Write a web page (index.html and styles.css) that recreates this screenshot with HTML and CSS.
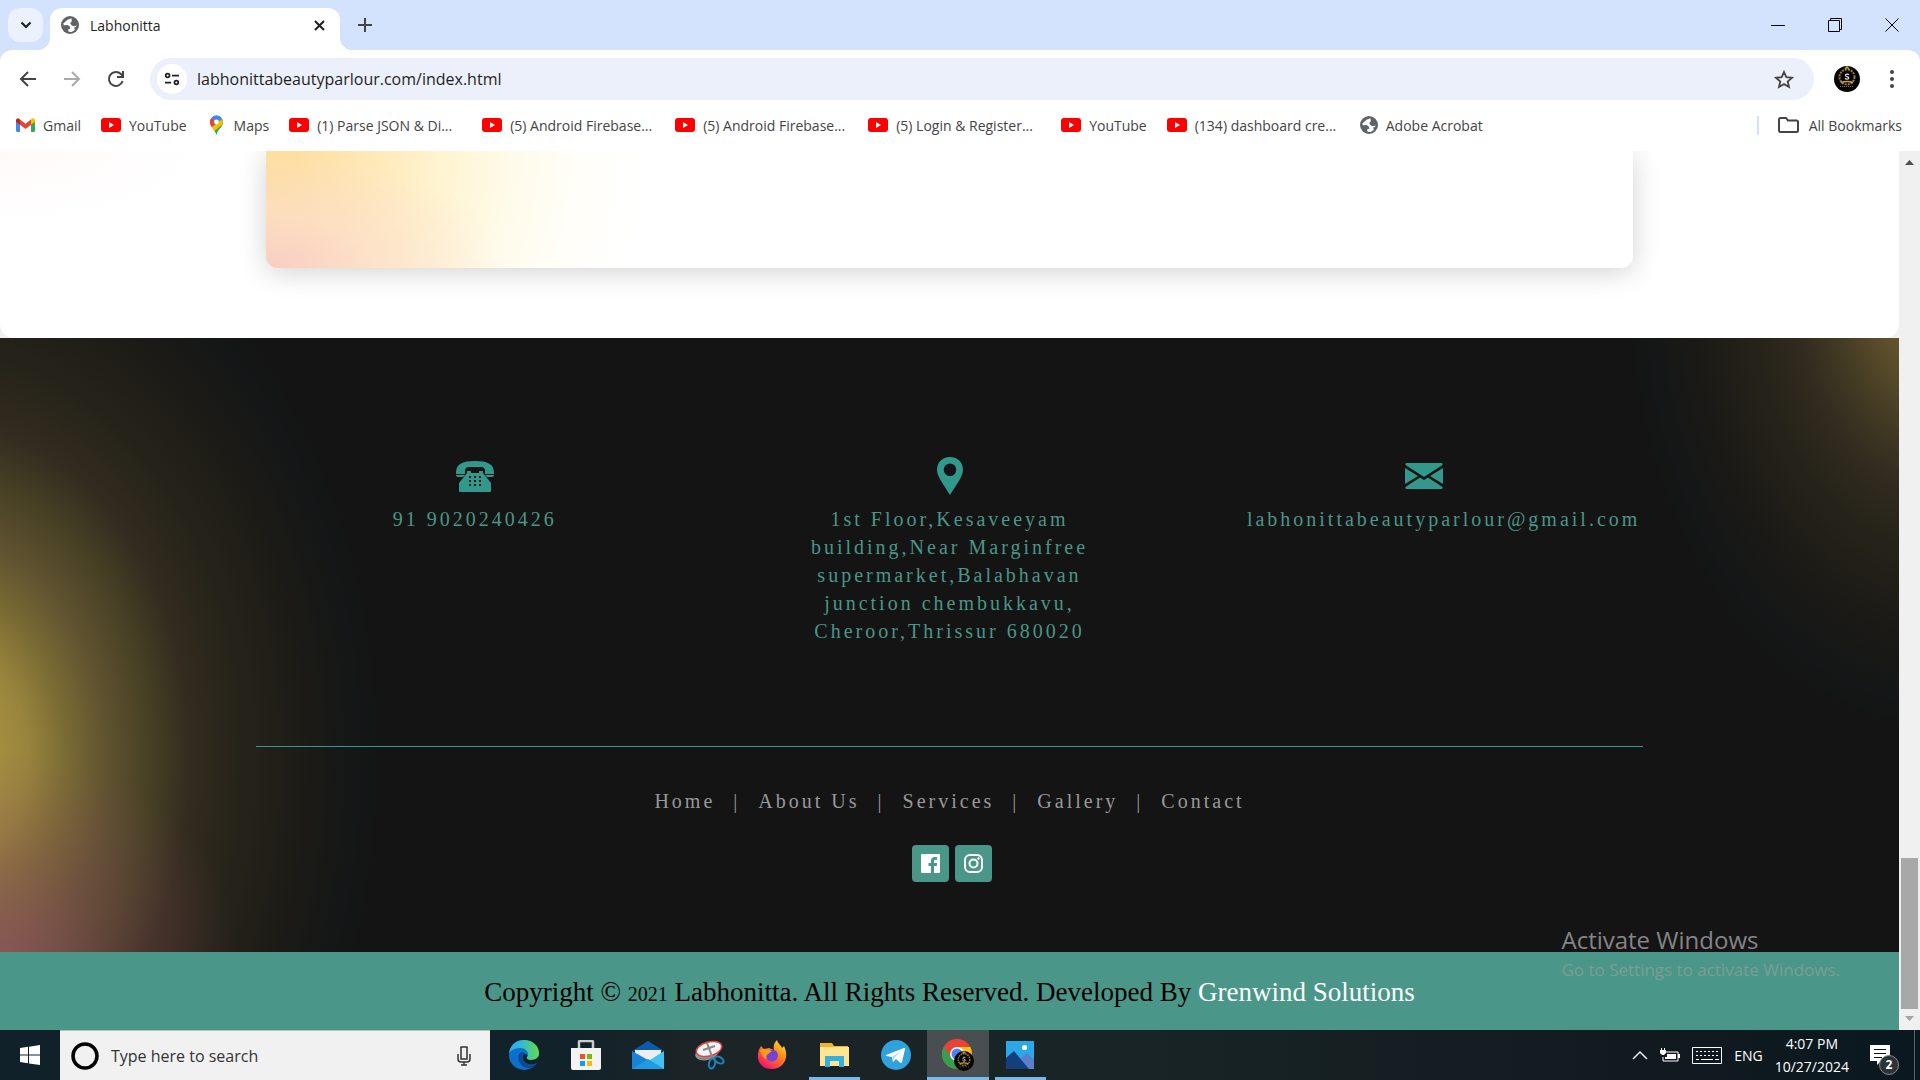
FILE: index.html
```html
<!DOCTYPE html>
<html lang="en">
<head>
<meta charset="utf-8">
<title>Labhonitta</title>
<link rel="stylesheet" href="styles.css">
</head>
<body>
<svg class="defs" aria-hidden="true">
  <symbol id="globe" viewBox="0 0 18 18"><circle cx="9" cy="9" r="9" fill="#5f6368"/><path d="M10.500 2.200 6.500 3.800 2.300 7.600l.5 1.700 3.700-.3 2 1.300 1 2.200-2.500.9.600 2.300 3 .2 3.200-1.900-.6-2.600 1.600-.5 1-1.500-2.600.9-2.400-.7-1.600-2.400 1.600-1.900z" fill="#fff"/></symbol>
  <symbol id="yt" viewBox="0 0 20 14"><rect width="20" height="14" rx="3" fill="#f00"/><path d="M8 4v6l5-3z" fill="#fff"/></symbol>
  <symbol id="seal" viewBox="0 0 26 26"><circle cx="13" cy="13" r="13" fill="#050505"/><circle cx="13" cy="11" r="7.500" fill="none" stroke="#9a7b2c" stroke-width="2" stroke-dasharray="2 1"/><path d="M11 3l2-2 2 2M7 16.500q6-2 12 0" fill="none" stroke="#c9a343" stroke-width="1.500"/><path d="M15 9c-1-1.500-4-1-3.500.6.400 1.200 3.200.9 3.300 2.400 0 1.500-3 1.600-3.800.1" fill="none" stroke="#ddd" stroke-width="1.200"/><path d="M6 20.500h14" stroke="#775" stroke-dasharray="1 1"/></symbol>
</svg>

<header class="browser">
  <div class="tabstrip">
    <button class="tab-search" aria-label="Search tabs"><svg width="12" height="8" viewBox="0 0 12 8"><path d="M1.500 1.500 6 6l4.500-4.500" fill="none" stroke="#1f1f1f" stroke-width="2.200"/></svg></button>
    <div class="tab">
      <svg width="18" height="18"><use href="#globe"/></svg>
      <span class="tab-title">Labhonitta</span>
      <button class="plain" aria-label="Close tab"><svg width="11" height="11" viewBox="0 0 11 11"><path d="m1 1 9 9m0-9-9 9" stroke="#1f1f1f" stroke-width="2"/></svg></button>
    </div>
    <button class="plain new-tab" aria-label="New tab"><svg width="14" height="14" viewBox="0 0 14 14"><path d="M7 0v14M0 7h14" stroke="#444" stroke-width="2"/></svg></button>
    <div class="window-buttons">
      <button class="plain" aria-label="Minimize"><svg width="14" height="14"><path d="M0 7.500h14" stroke="#000"/></svg></button>
      <button class="plain" aria-label="Restore"><svg width="14" height="14"><path d="M.5 2.500h11v11H.5zM2.500 2.500v-2h11v11h-2" fill="none" stroke="#000"/></svg></button>
      <button class="plain" aria-label="Close"><svg width="14" height="14"><path d="m.5.500 13 13m0-13-13 13" stroke="#000"/></svg></button>
    </div>
  </div>
  <div class="toolbar">
    <button class="plain tool" aria-label="Back"><svg width="18" height="18" viewBox="0 0 18 18"><path d="M17 9H2m7-7L2 9l7 7" fill="none" stroke="#444" stroke-width="2"/></svg></button>
    <button class="plain tool" aria-label="Forward"><svg width="18" height="18" viewBox="0 0 18 18"><path d="M1 9h15M9 2l7 7-7 7" fill="none" stroke="#aaa" stroke-width="2"/></svg></button>
    <button class="plain tool" aria-label="Reload"><svg width="18" height="18" viewBox="0 0 18 18"><path d="M15.600 11a7 7 0 1 1-1.700-7l2 2M16 1v6h-6" fill="none" stroke="#444" stroke-width="2"/></svg></button>
    <div class="omnibox">
      <button class="site-info" aria-label="Site information"><svg width="16" height="14" viewBox="0 0 18 16"><g fill="none" stroke="#222" stroke-width="2"><circle cx="4" cy="4" r="2.200"/><path d="M9 4h8M1 12h7"/><circle cx="14" cy="12" r="2.200"/></g></svg></button>
      <input class="url" type="text" aria-label="Address" value="labhonittabeautyparlour.com/index.html">
      <button class="plain" aria-label="Bookmark this page"><svg width="20" height="19" viewBox="0 0 20 19"><path d="m10 2 2.300 5.200 5.700.5-4.300 3.800 1.300 5.500-5-2.900L5 17l1.300-5.500L2 7.700l5.700-.5z" fill="none" stroke="#444" stroke-width="1.800"/></svg></button>
    </div>
    <button class="plain profile" aria-label="Profile"><svg width="26" height="26"><use href="#seal"/></svg></button>
    <button class="plain menu" aria-label="Menu"><svg width="4" height="18" viewBox="0 0 4 18"><g fill="#444"><circle cx="2" cy="2" r="2"/><circle cx="2" cy="9" r="2"/><circle cx="2" cy="16" r="2"/></g></svg></button>
  </div>
  <nav class="bookmarks" aria-label="Bookmarks">
    <a href="#"><svg width="19" height="14" viewBox="0 0 19 14"><path d="M0 2v10.500Q0 14 1.500 14H4V5z" fill="#4285f4"/><path d="M15 5v9h2.500q1.500 0 1.500-1.500V2z" fill="#34a853"/><path d="M4 1.500v5.300l5.500 4.200L15 6.800V1.500L9.500 5.700z" fill="#ea4335"/><path d="M15 1.500v5.300l4-3V2q-1-3-4-.5z" fill="#fbbc04"/><path d="M0 2v1.800l4 3V1.500Q1-1 0 2z" fill="#c5221f"/></svg>Gmail</a>
    <a href="#"><svg width="20" height="14"><use href="#yt"/></svg>YouTube</a>
    <a href="#"><svg width="19" height="20" viewBox="0 0 19 20"><path d="M3 7a6.500 6.500 0 0 1 13 0c0 5-5.500 6.500-6.500 13C9 15 3 11 3 7z" fill="#34a853"/><path d="M3 7a6.500 6.500 0 0 1 1.500-4.100L9.500 7l-4.800 5.300Q3 10 3 7z" fill="#ea4335"/><path d="M4.500 2.900A6.500 6.500 0 0 1 14.500 3L9.500 8z" fill="#4285f4"/><path d="m4.700 12.300 10.500-8.400q1.500 3.600-.4 6.600L8 17z" fill="#fbbc04"/><path d="M15.600 9.200 7.600 16q1.600 2 1.900 4c.5-5.500 5-7 6.100-10.800z" fill="#34a853"/><circle cx="9.500" cy="7" r="2.400" fill="#fff"/></svg>Maps</a>
    <a href="#" class="long"><svg width="20" height="14"><use href="#yt"/></svg>(1) Parse JSON &amp; Di...</a>
    <a href="#" class="long"><svg width="20" height="14"><use href="#yt"/></svg>(5) Android Firebase...</a>
    <a href="#" class="long"><svg width="20" height="14"><use href="#yt"/></svg>(5) Android Firebase...</a>
    <a href="#" class="long"><svg width="20" height="14"><use href="#yt"/></svg>(5) Login &amp; Register...</a>
    <a href="#"><svg width="20" height="14"><use href="#yt"/></svg>YouTube</a>
    <a href="#" class="long"><svg width="20" height="14"><use href="#yt"/></svg>(134) dashboard cre...</a>
    <a href="#"><svg width="18" height="18"><use href="#globe"/></svg>Adobe Acrobat</a>
    <a href="#" class="all-bookmarks"><svg width="21" height="16" viewBox="0 0 21 16"><path d="M1 2.500Q1 1 2.500 1H8l2 2.500h8.500Q20 3.500 20 5v8.500q0 1.500-1.500 1.500h-16Q1 15 1 13.500z" fill="none" stroke="#444" stroke-width="2"/></svg>All Bookmarks</a>
  </nav>
</header>

<div class="viewport">
  <div class="page">
    <main class="main">
      <section class="card"></section>
    </main>
    <footer class="footer">
      <div class="contacts">
        <div class="contact">
          <svg width="38" height="38" viewBox="0 0 38 38" fill="#32988b"><path d="M0 16C0 7 6 4 19 4s19 3 19 12v1h-9v-3q0-4-4-4H13q-4 0-4 4v3H0zM0 18h9q-1 2-3 2H2q-2 0-2-2zm29 0h9q0 2-2 2h-4q-2 0-3-2z"/><path fill-rule="evenodd" d="M11 14h4v2h8v-2h4v2l8 10v8q0 1-1 1H4q-1 0-1-1v-8l8-10zm2 5v2h2v-2zm5 0v2h2v-2zm5 0v2h2v-2zm-10 4v2h2v-2zm5 0v2h2v-2zm5 0v2h2v-2zm-10 4v2h2v-2zm5 0v2h2v-2zm5 0v2h2v-2z"/></svg>
          <a href="#">91 9020240426</a>
        </div>
        <div class="contact">
          <svg width="38" height="38" viewBox="0 0 38 38" fill="#32988b"><path fill-rule="evenodd" d="M19 0c8 0 13 5.500 13 13 0 6-5 12-13 25C11 25 6 19 6 13 6 5.500 11 0 19 0zm0 6.500a6.300 6.300 0 1 0 0 12.600 6.300 6.300 0 0 0 0-12.600z"/></svg>
          <address>1st Floor,Kesaveeyam<br>building,Near Marginfree<br>supermarket,Balabhavan<br>junction chembukkavu,<br>Cheroor,Thrissur 680020</address>
        </div>
        <div class="contact">
          <svg width="38" height="38" viewBox="0 0 38 38" fill="#32988b"><path d="M1 6h36q1 1 .5 2L22 18l-3 2-3-2L.5 8Q0 7 1 6zM0 11l13 8-13 8zm38 0v16l-13-8zM.5 30 15 20.500l4 2.500 4-2.500L37.500 30q.5 1-.5 2H1q-1-1-.5-2z"/></svg>
          <a href="#" class="email">labhonittabeautyparlour@gmail.com</a>
        </div>
      </div>
      <hr class="rule">
      <nav class="site-nav" aria-label="Site">
        <a href="#">Home</a><span>|</span><a href="#">About Us</a><span>|</span><a href="#">Services</a><span>|</span><a href="#">Gallery</a><span>|</span><a href="#">Contact</a>
      </nav>
      <div class="social">
        <a href="#" aria-label="Facebook"><svg width="19" height="19" viewBox="0 0 19 19"><path fill="#fff" d="M1 0h17q1 0 1 1v17q0 1-1 1h-5v-7h2.700l.4-3H13V7.200q0-1.400 1.600-1.400h1.600V3.200Q9.900 2.100 9.900 7v2H7.500v3h2.400v7H1q-1 0-1-1V1q0-1 1-1z"/></svg></a>
        <a href="#" aria-label="Instagram"><svg width="19" height="19" viewBox="0 0 19 19"><rect x="1" y="1" width="17" height="17" rx="5" fill="none" stroke="#fff" stroke-width="2"/><circle cx="9.500" cy="9.500" r="4" fill="none" stroke="#fff" stroke-width="2"/><circle cx="14.500" cy="4.500" r="1.200" fill="#fff"/></svg></a>
      </div>
    </footer>
    <div class="copyright">Copyright © <small>2021</small> Labhonitta. All Rights Reserved. Developed By <a href="#">Grenwind Solutions</a></div>
  </div>
  <div class="scrollbar">
    <svg width="9" height="5"><path d="M0 5h9L4.500 0z" fill="#505050"/></svg>
    <div class="thumb"></div>
    <svg width="9" height="5"><path d="M0 0h9L4.500 5z" fill="#a3a3a3"/></svg>
  </div>
  <div class="watermark"><strong>Activate Windows</strong><span>Go to Settings to activate Windows.</span></div>
</div>

<footer class="taskbar">
  <button class="plain start" aria-label="Start"><svg width="20" height="20" viewBox="0 0 20 20"><path d="M0 3l8-1.200V9.500H0zm9-1.300L20 0v9.500H9zM0 10.500h8v7.700L0 17zm9 0h11V20L9 18.400z" fill="#fff"/></svg></button>
  <label class="search">
    <svg width="28" height="28" viewBox="0 0 28 28"><circle cx="14" cy="14" r="12" fill="none" stroke="#000" stroke-width="3.500"/></svg>
    <input type="text" placeholder="Type here to search" aria-label="Search">
    <svg width="14" height="20" viewBox="0 0 14 20"><path d="M4 1h6v12H4zM1 8v5q0 3 3 3h6q3 0 3-3V8M7 16v3m-3 0h6" fill="none" stroke="#333" stroke-width="1.500"/></svg>
  </label>
  <div class="apps">
    <button class="app" aria-label="Edge"><svg width="30" height="30" viewBox="0 0 30 30"><defs><linearGradient id="eg"><stop offset=".3" stop-color="#2bb3e3"/><stop offset="1" stop-color="#62db50"/></linearGradient></defs><circle cx="15" cy="15" r="15" fill="#0c6fc9"/><path d="M0 14C1 4 8 0 15 0c9 0 15 6 15 13 0 5-4 7-8 7-4 0-5-2-4-3 3-4-1-9-7-9C5 8 1 11 0 14z" fill="url(#eg)"/><path d="M10 14c-3 8 4 15 11 14 3-.5 5-2 7-5-6 3-14 1-14-6 0-2 1-3 2-4-3-1-5 0-6 1z" fill="#0b4a94"/><path d="M18 17c-1 1 0 3 4 3 3 0 6-1 7.500-4L30 20l-2 3c-6 3-14 1-14-6 0-2 1-3 2-3 2 0 3 1 2 3z" fill="#13222a"/></svg></button>
    <button class="app" aria-label="Store"><svg width="30" height="30" viewBox="0 0 30 30"><path d="M8 9V2q0-1 1-1h12q1 0 1 1v7" fill="none" stroke="#ccc" stroke-width="2.500"/><path d="M0 8h30v20q0 2-2 2H2q-2 0-2-2z" fill="#f3f3f3"/><path d="M9 14h5v5H9z" fill="#f25022"/><path d="M16 14h5v5h-5z" fill="#7fba00"/><path d="M9 21h5v5H9z" fill="#00a4ef"/><path d="M16 21h5v5h-5z" fill="#ffb900"/></svg></button>
    <button class="app" aria-label="Mail"><svg width="32" height="28" viewBox="0 0 32 28"><path d="M0 10 16 0l16 10z" fill="#0a5cab"/><path d="M3 9h26v12H3z" fill="#eee"/><path d="M0 10v18h32z" fill="#1683d8"/><path d="M32 10v18H4z" fill="#43c1f2"/><path d="M0 28h32L16 18z" fill="#219ae4"/></svg></button>
    <button class="app" aria-label="Snipping Tool"><svg width="30" height="30" viewBox="0 0 30 30"><ellipse cx="12" cy="13" rx="12" ry="7" transform="rotate(-15 12 13)" fill="#999"/><ellipse cx="14" cy="9" rx="13" ry="7" transform="rotate(-15 14 9)" fill="#f4f4f4" stroke="#d44" stroke-width="1.500"/><path d="M12 3l6 16M4 19l14-1M8 10l12-4" stroke="#888" stroke-width="2"/><g fill="none" stroke="#1d84bd" stroke-width="2"><ellipse cx="17" cy="23.500" rx="3" ry="5" transform="rotate(15 17 23.500)"/><ellipse cx="24" cy="20" rx="5" ry="3" transform="rotate(30 24 20)"/></g></svg></button>
    <button class="app" aria-label="Firefox"><svg width="30" height="30" viewBox="0 0 30 30"><defs><linearGradient id="ff" x1="1" y1="0" x2=".3" y2="1"><stop offset="0" stop-color="#fff044"/><stop offset=".45" stop-color="#ff8a16"/><stop offset="1" stop-color="#f5156c"/></linearGradient></defs><path d="M4 6l3 3 5-1 5 2c-1-4 0-7 3-10 1 4 4 5 5 8l2-2c6 12-1 23-12 23C2 29-3 17 4 6z" fill="url(#ff)"/><circle cx="15" cy="15.500" r="6" fill="#7542d5"/><path d="M3 10c4-2 8-1 12 1l-4 3q-3 2-1 5-5-1-7-9z" fill="#ff9a1f"/></svg></button>
    <button class="app open" aria-label="File Explorer"><svg width="30" height="26" viewBox="0 0 30 26"><path d="M1 1h12l2 3h14v4H1z" fill="#f0b429"/><path d="M1 5h29v19H1z" fill="#ffe492"/><path d="M6 25V14h19v11h-5v-6h-9v6z" fill="#35aee2"/></svg></button>
    <button class="app" aria-label="Telegram"><svg width="30" height="30" viewBox="0 0 30 30"><circle cx="15" cy="15" r="15" fill="#30a3dd"/><path d="m5 15 18-7q1.500-.5 1 1l-3 13q-.5 1.500-2 .5l-4-3.500-3 3-1-5-5.500-1q-1-.3-.5-1z" fill="#fff"/><path d="m11 17 10-7-8 8-1 4z" fill="#b8d8e9"/></svg></button>
    <button class="app open active" aria-label="Chrome"><svg width="32" height="32" viewBox="0 0 32 32"><circle cx="15" cy="15" r="15" fill="#ea4335"/><path d="M2 7.500A15 15 0 0 0 15 30l6-11H9z" fill="#34a14f"/><path d="M15 8h13.200A15 15 0 0 1 15 30l6.500-11z" fill="#fbc116"/><circle cx="15" cy="15" r="7" fill="#fff"/><circle cx="15" cy="15" r="5.500" fill="#4285f4"/><svg x="12" y="12" width="20" height="20"><use href="#seal"/></svg></svg></button>
    <button class="app open" aria-label="Photos"><svg width="28" height="28" viewBox="0 0 28 28"><path d="M0 0h28v28H0z" fill="#2aa8ea"/><path d="m12 20 9-8 7 7v9H12z" fill="#5b7fcd"/><path d="M0 17 8 10l15 18H0z" fill="#153f7c"/><circle cx="18.500" cy="6.500" r="2.600" fill="#fff"/></svg></button>
  </div>
  <div class="tray">
    <svg width="16" height="10"><path d="m1 9 7-7 7 7" fill="none" stroke="#eee" stroke-width="1.500"/></svg>
    <svg width="20" height="14"><path d="M5 4h13v9H3V9" fill="none" stroke="#fff"/><path d="M7 6h9v5H5V9h2zM18 6h2v4h-2zM0 2h6v3L4 7H2L0 5zM1 0h1v2H1zm3 0h1v2H4z" fill="#fff"/></svg>
    <svg width="30" height="17" viewBox="0 0 30 17"><path d="M.5.500h29v16H.5z" fill="none" stroke="#fff"/><path d="M4 4.500h23M4 8.500h23" stroke="#fff" stroke-dasharray="2 2"/><path d="M4 12.500h3m2 0h12m2 0h4" stroke="#fff"/></svg>
    <span>ENG</span>
    <time class="clock"><span>4:07 PM</span><span>10/27/2024</span></time>
    <button class="plain notice" aria-label="Notifications"><svg width="20" height="20" viewBox="0 0 20 20"><path d="M0 0h20v16H11l-4 4v-4H0z" fill="#fff"/><path d="M4 4.500h12M4 8.500h12M4 12.500h8" stroke="#111"/></svg><span class="badge">2</span></button>
  </div>
</footer>
</body>
</html>
```
FILE: styles.css
```css
* { box-sizing: border-box; }

body {
  display: flex;
  flex-direction: column;
  height: 100vh;
  margin: 0;
  overflow: hidden;
  font-family: "Open Sans", "Noto Sans", sans-serif;
  color: #1f1f1f;
}

a { color: inherit; text-decoration: none; }
button, input { font: inherit; color: inherit; }
svg { display: block; flex: none; }

.defs { position: absolute; width: 0; height: 0; }

.plain {
  display: flex;
  align-items: center;
  justify-content: center;
  padding: 0;
  border: 0;
  background: none;
}

/* Browser chrome */
.browser { flex: none; background: #d3e2fd; }

.tabstrip {
  display: flex;
  align-items: flex-end;
  height: 50px;
  padding-left: 8px;
}

.tab-search {
  display: flex;
  align-items: center;
  justify-content: center;
  width: 35px;
  height: 34px;
  margin: 0 7px 8px 0;
  padding: 0;
  border: 0;
  border-radius: 12px;
  background: #ebf1fd;
}

.tab {
  position: relative;
  display: flex;
  align-items: center;
  gap: 11px;
  width: 290px;
  height: 42px;
  padding: 0 15px 8px 11px;
  border-radius: 12px 12px 0 0;
  background: #fff;
  font-size: 14px;
}

.tab::before,
.tab::after {
  content: "";
  position: absolute;
  bottom: 0;
  width: 12px;
  height: 12px;
}

.tab::before { right: 100%; background: radial-gradient(circle at 0 0, transparent 12px, #fff 12px); }
.tab::after { left: 100%; background: radial-gradient(circle at 100% 0, transparent 12px, #fff 12px); }

.tab-title { flex: 1; }
.new-tab { width: 50px; height: 50px; }
.window-buttons { display: flex; margin-left: auto; }
.window-buttons button { width: 57px; height: 50px; }

.toolbar {
  display: flex;
  align-items: center;
  height: 58px;
  padding: 0 16px 0 6px;
  border-radius: 12px 12px 0 0;
  background: #fff;
}

.tool { width: 44px; height: 42px; }

.omnibox {
  display: flex;
  flex: 1;
  align-items: center;
  height: 42px;
  margin-left: 12px;
  padding: 0 20px 0 7px;
  border-radius: 21px;
  background: #ecf0fa;
}

.site-info {
  display: flex;
  align-items: center;
  justify-content: center;
  width: 30px;
  height: 30px;
  padding: 0;
  border: 0;
  border-radius: 50%;
  background: #fff;
}

.url {
  flex: 1;
  min-width: 0;
  padding: 0 10px;
  border: 0;
  background: none;
  font-size: 16px;
}

.profile { width: 26px; margin: 0 20px; }
.menu { width: 24px; }

.bookmarks {
  display: flex;
  align-items: center;
  gap: 20px;
  height: 43px;
  padding: 0 18px 9px 16px;
  background: #fff;
  color: #444;
  font-size: 14px;
  white-space: nowrap;
}

.bookmarks a { display: flex; align-items: center; gap: 8px; }
.bookmarks .long { min-width: 173px; }

.bookmarks .all-bookmarks {
  gap: 10px;
  margin-left: auto;
  padding-left: 19px;
  border-left: 2px solid #d3e2fd;
}

/* Web page */
.viewport {
  position: relative;
  display: flex;
  flex: 1;
  min-height: 0;
  overflow: hidden;
}

.page {
  display: flex;
  flex: 1;
  flex-direction: column;
  min-width: 0;
  background: #f0f0f0;
  font-family: "Liberation Serif", serif;
}

.main {
  flex: 1;
  padding-bottom: 70px;
  overflow: hidden;
  border-radius: 0 0 14px 14px;
  background: radial-gradient(ellipse 200px 70px at 0 0, #fffaf9, #fff) #fff;
}

.card {
  width: 72%;
  height: 100%;
  margin: 0 auto;
  border-radius: 0 0 12px 12px;
  background:
    radial-gradient(ellipse 240px 120px at 0 100%, #f9cdc2, rgba(251, 218, 203, .6) 45%, transparent),
    radial-gradient(ellipse 380px 400px at 0 0, #fedf9f 8%, #ffe9b8 28%, #fff4d0 46%, #fffbea 65%, #fffef8 82%, transparent),
    #fff;
  box-shadow: 0 4px 28px rgba(0, 0, 0, .18);
}

.footer {
  flex: none;
  padding: 119px 0 70px;
  background:
    radial-gradient(ellipse 240px 200px at 0 100%, rgba(150, 86, 100, .7), rgba(140, 80, 90, .35) 45%, transparent),
    radial-gradient(ellipse 440px 590px at -60px 420px, #a28c40 14%, #98843d 20%, #7c6d34 28%, #5f5230 38%, #474024 48%, #332b1f 57%, #252319 69%, #1b1a16 84%, #141717 95%, transparent),
    radial-gradient(ellipse 310px 440px at calc(100% + 40px) -50px, #786536, #65552e 17%, #443b24 34%, #322b1f 46%, #252319 60%, #1a1916 80%, #141717 94%, transparent),
    #141414;
}

.contacts {
  display: grid;
  grid-template-columns: repeat(3, 1fr);
  width: 75%;
  min-height: 289px;
  margin: 0 auto;
  color: #4a9688;
  font-size: 20px;
  line-height: 28px;
  letter-spacing: 3px;
  text-align: center;
}

.contact {
  display: flex;
  flex-direction: column;
  align-items: center;
  gap: 10px;
  min-width: 0;
  padding: 0 60px;
}

.contact address { font-style: normal; }
.contact .email { align-self: flex-start; }

.rule {
  width: 73%;
  height: 1px;
  margin: 0 auto;
  border: 0;
  background: #32988b;
}

.site-nav {
  display: flex;
  justify-content: center;
  gap: 18px;
  margin-top: 40px;
  color: #999;
  font-size: 20px;
  line-height: 28px;
  letter-spacing: 3px;
}

.social {
  display: flex;
  justify-content: center;
  gap: 6px;
  margin-top: 30px;
  padding-left: 4px;
}

.social a {
  display: grid;
  place-items: center;
  width: 37px;
  height: 37px;
  border-radius: 4px;
  background: #4a9688;
}

.copyright {
  flex: none;
  height: 78px;
  background: #4a9688;
  color: #000;
  font-size: 27px;
  line-height: 80px;
  text-align: center;
}

.copyright small { font-size: 20px; }
.copyright a { color: #fff; }

.scrollbar {
  display: flex;
  flex: none;
  flex-direction: column;
  align-items: center;
  justify-content: space-between;
  width: 21px;
  padding: 9px 0;
  background: #f0f0f0;
}

.thumb {
  width: 17px;
  height: 151px;
  margin: auto 0 7px;
  background: #a8a8a8;
}

.watermark {
  position: absolute;
  right: 80px;
  bottom: 45px;
  display: flex;
  flex-direction: column;
  color: #7a9e97;
  font-size: 17px;
  line-height: 30px;
  pointer-events: none;
}

.watermark strong { color: #858585; font-size: 24px; font-weight: 400; }

/* Taskbar */
.taskbar {
  display: flex;
  flex: none;
  height: 50px;
  background: linear-gradient(90deg, #11212a, #12222a 30%, #1b2426 36%, #182426 60%, #121a1f 85%, #0a1820);
  color: #fff;
}

.start { width: 60px; }

.search {
  display: flex;
  align-items: center;
  gap: 12px;
  width: 430px;
  padding: 0 19px 0 11px;
  border-top: 1px solid #bbb;
  background: #f1f1f1;
}

.search input {
  flex: 1;
  min-width: 0;
  padding: 0;
  border: 0;
  background: none;
  color: #333;
  font-size: 16px;
}

.search input::placeholder { color: #333; opacity: 1; }

.apps { display: flex; padding-left: 3px; }

.app {
  display: flex;
  align-items: center;
  justify-content: center;
  width: 62px;
  padding: 0;
  border: 0;
  background: none;
}

.open { background: linear-gradient(#76b9ed, #76b9ed) center bottom / 51px 3px no-repeat; }
.active { background-color: #494f51; background-size: 62px 3px; }

.tray {
  display: flex;
  align-items: center;
  gap: 12px;
  margin-left: auto;
  margin-right: 5px;
  padding-right: 15px;
  border-right: 1px solid #59636a;
  font-size: 14px;
}

.clock {
  display: flex;
  flex-direction: column;
  line-height: 23px;
  text-align: center;
}

.notice { position: relative; width: 38px; height: 40px; }

.badge {
  position: absolute;
  right: 0;
  bottom: 0;
  width: 20px;
  height: 20px;
  border: 1px solid #888;
  border-radius: 50%;
  background: #2c3236;
  font-size: 12px;
  font-weight: 700;
  line-height: 18px;
}
```
